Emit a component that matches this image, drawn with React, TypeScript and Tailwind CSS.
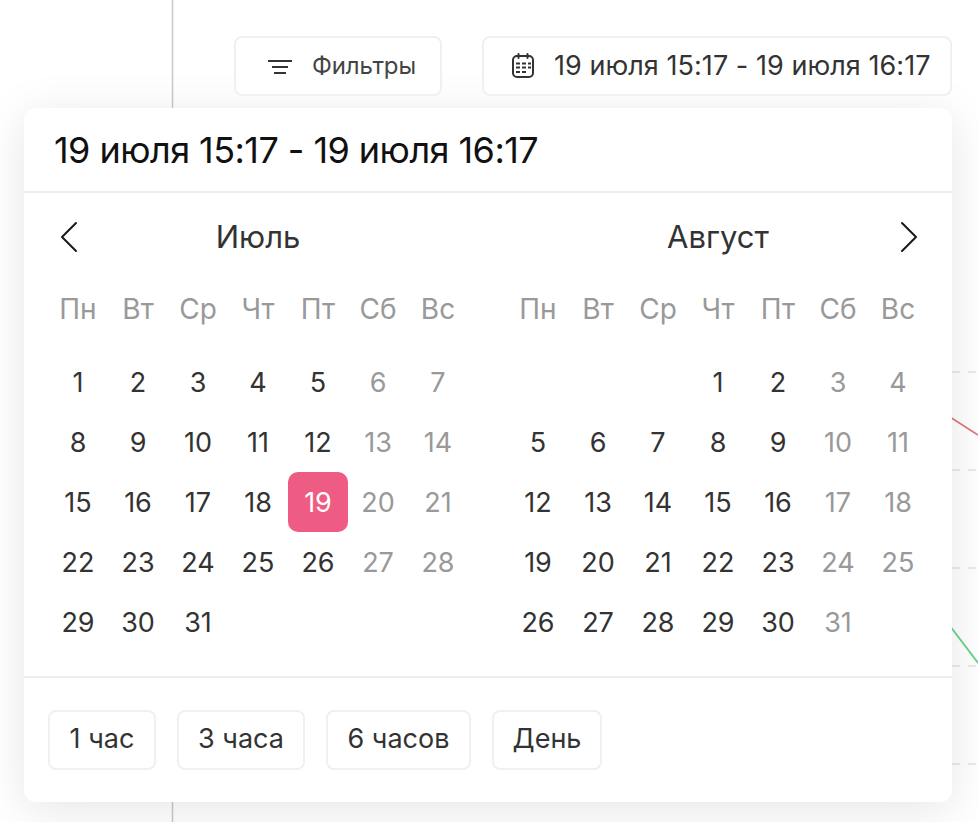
const weekdays = ["Пн", "Вт", "Ср", "Чт", "Пт", "Сб", "Вс"];

const july: (number | null)[] = Array.from({ length: 31 }, (_, i) => i + 1);
const august: (number | null)[] = [null, null, null, ...Array.from({ length: 31 }, (_, i) => i + 1)];

const Chevron = ({ dir }: { dir: "left" | "right" }) => (
  <svg width="18" height="32" viewBox="0 0 18 32" fill="none" className="shrink-0">
    <polyline
      points={dir === "left" ? "16,2 2,16 16,30" : "2,2 16,16 2,30"}
      stroke="#1a1a1a"
      strokeWidth="2"
      strokeLinecap="round"
      strokeLinejoin="round"
    />
  </svg>
);

const Month = ({ days, selected }: { days: (number | null)[]; selected?: number }) => (
  <div className="w-[420px]">
    <div className="grid grid-cols-7 h-[60px] mt-[12px] items-center text-center text-[28px] text-[#999999]">
      {weekdays.map((d) => (
        <div key={d}>{d}</div>
      ))}
    </div>
    <div className="grid grid-cols-7 auto-rows-[60px] mt-[13px] text-[27px] text-[#333333]">
      {days.map((d, i) => {
        const weekend = i % 7 >= 5;
        if (d === null) return <div key={i} />;
        return (
          <div
            key={i}
            className={
              d === selected
                ? "flex items-center justify-center pt-[2px] rounded-[10px] bg-[#ee5c84] text-white"
                : weekend
                  ? "flex items-center justify-center pt-[2px] text-[#999999]"
                  : "flex items-center justify-center pt-[2px]"
            }
          >
            {d}
          </div>
        );
      })}
    </div>
  </div>
);

const RangeButton = ({ label, width }: { label: string; width: string }) => (
  <button className={`h-[60px] ${width} pb-[2px] rounded-[8px] border-2 border-solid border-[#f0f0f0] bg-white text-[27px] text-[#333333]`}>
    {label}
  </button>
);

export default function App() {
  return (
    <div className="relative w-[978px] h-[822px] overflow-hidden bg-white font-['Inter',sans-serif]">
      {/* chart behind the popup */}
      <svg width="978" height="822" className="absolute inset-0">
        <line x1="172.5" y1="0" x2="172.5" y2="822" stroke="#c9c9c9" strokeWidth="1.5" />
        <g stroke="#e4e4e4" strokeWidth="1.5" strokeDasharray="8 8">
          <line x1="952" y1="372" x2="978" y2="372" />
          <line x1="952" y1="470" x2="978" y2="470" />
          <line x1="952" y1="568" x2="978" y2="568" />
          <line x1="952" y1="666" x2="978" y2="666" />
          <line x1="952" y1="764" x2="978" y2="764" />
        </g>
        <line x1="950" y1="417" x2="978" y2="435" stroke="#e07a7a" strokeWidth="1.75" />
        <line x1="950" y1="626" x2="978" y2="663" stroke="#6fd48e" strokeWidth="2" />
      </svg>

      <div className="relative">
        <div className="flex justify-end gap-[40px] pt-[36px] pr-[26px]">
          <button className="flex items-center h-[60px] w-[208px] pl-[32px] rounded-[8px] border-2 border-solid border-[#f0f0f0] bg-white text-[24px] text-[#444444] tracking-[-0.1px]">
            <svg width="24" height="18" viewBox="0 0 24 18" fill="none" className="mr-[20px] shrink-0">
              <g stroke="#333333" strokeWidth="2">
                <line x1="0" y1="4" x2="24" y2="4" />
                <line x1="4" y1="10" x2="20" y2="10" />
                <line x1="6" y1="16" x2="18" y2="16" />
              </g>
            </svg>
            Фильтры
          </button>
          <button className="flex items-center h-[60px] w-[470px] pl-[27px] rounded-[8px] border-2 border-solid border-[#f0f0f0] bg-white text-[27px] text-[#333333] tracking-[0.05px]">
            <svg width="24" height="26" viewBox="0 0 24 26" fill="none" className="mr-[19px] shrink-0">
              <rect x="2" y="3" width="20" height="21" rx="4" stroke="#333333" strokeWidth="2" />
              <path d="M7.5 1v4M16.5 1v4" stroke="#333333" strokeWidth="2" strokeLinecap="round" />
              <path d="M5 10.5h4M11 10.5h4M17 10.5h3M5 14.5h4M11 14.5h4M17 14.5h3M5 19h4M11 19h4" stroke="#333333" strokeWidth="2" />
            </svg>
            19 июля 15:17 - 19 июля 16:17
          </button>
        </div>

        <div className="ml-[24px] mt-[12px] w-[928px] h-[694px] rounded-[12px] bg-white shadow-[0_8px_48px_rgba(0,0,0,0.1)]">
          <div className="flex items-center h-[85px] pl-[30px] border-b-2 border-solid border-[#eeeeee] text-[36px] text-[#111111] tracking-[-0.55px]">
            19 июля 15:17 - 19 июля 16:17
          </div>

          <div className="relative h-[485px] border-b-2 border-solid border-[#eeeeee]">
            <div className="flex items-center h-[60px] pt-[14px] box-content text-[31px] text-[#333333]">
              <div className="ml-[36px]"><Chevron dir="left" /></div>
              <div className="w-[180px] ml-[90px] text-center">Июль</div>
              <div className="w-[180px] ml-[280px] text-center">Август</div>
              <div className="ml-[92px]"><Chevron dir="right" /></div>
            </div>
            <div className="flex gap-[40px] px-[24px]">
              <Month days={july} selected={19} />
              <Month days={august} />
            </div>
          </div>

          <div className="flex gap-[21px] pt-[32px] pl-[24px]">
            <RangeButton label="1 час" width="w-[108px]" />
            <RangeButton label="3 часа" width="w-[128px]" />
            <RangeButton label="6 часов" width="w-[145px]" />
            <RangeButton label="День" width="w-[110px]" />
          </div>
        </div>
      </div>
    </div>
  );
}
